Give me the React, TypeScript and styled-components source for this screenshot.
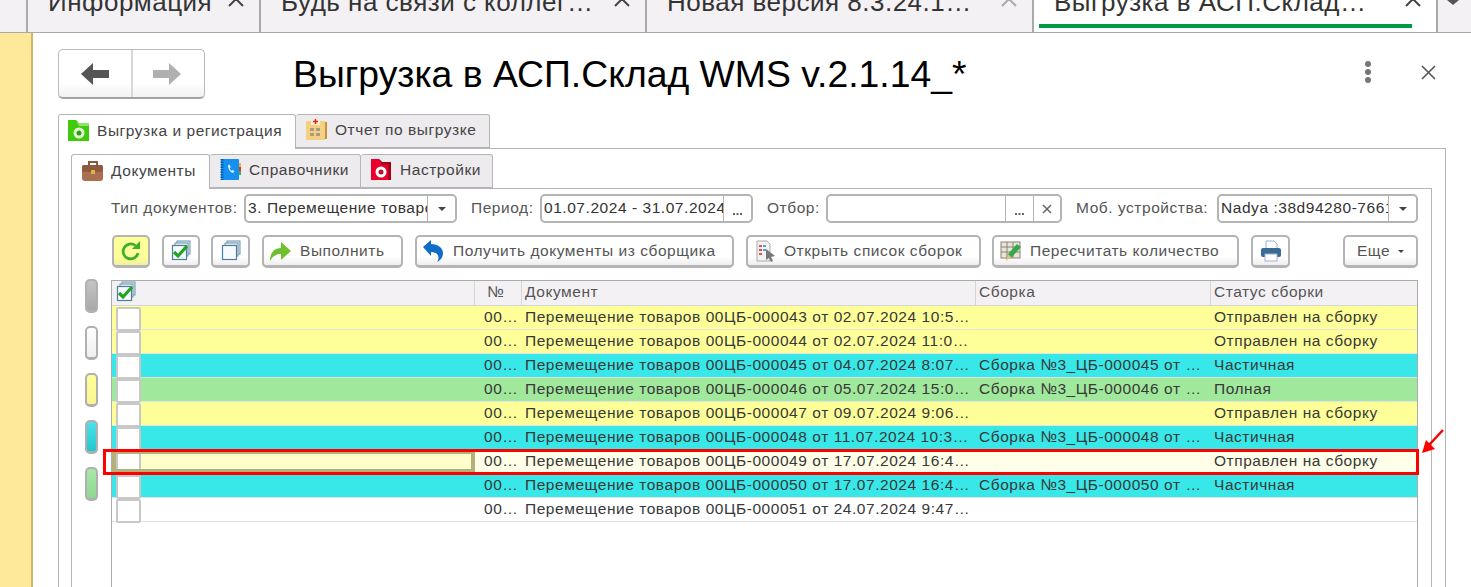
import React from "react";
import styled, { createGlobalStyle } from "styled-components";

const Global = createGlobalStyle`
  html, body { margin: 0; padding: 0; height: 100%; background: #fff; overflow: hidden; }
  #root { height: 587px; }
  * { box-sizing: border-box; }
`;
const Page = styled.div`
  width: 1471px; height: 587px; overflow: hidden; position: relative; display: flex; flex-direction: column;
  font-family: "Liberation Sans", Arial, sans-serif; color: #333; background: #fff;
`;
const TopBar = styled.div`
  height: 33px; flex: none; display: flex; background: #f4f1f5; border-bottom: 1px solid #aaa; overflow: hidden; padding-left: 26px;
`;
const TopTab = styled.div<{ $w: number; $active?: boolean }>`
  width: ${(p) => p.$w}px; flex: none; display: flex; align-items: flex-start; position: relative; overflow: hidden;
  height: 32px; padding-left: 20px; border-left: 2px solid #aaa; background: ${(p) => (p.$active ? "#fff" : "transparent")};
  ${(p) => (p.$active ? "border-right: 2px solid #aaa;" : "")}
`;
const TopTabText = styled.span`
  font-size: 26px; line-height: 24px; margin-top: -10px; white-space: nowrap; color: #333; letter-spacing: 0.5px; flex: 1;
`;
const TopClose = styled.svg<{ $dim?: boolean }>`
  position: absolute; top: -5px; right: 14px; width: 18px; height: 12px; fill: none;
  stroke: ${(p) => (p.$dim ? "#aaa" : "#444")}; stroke-width: 2;
`;
const GreenBar = styled.div`
  position: absolute; left: 5px; right: 24px; top: 24px; height: 4px; background: #009a46;
`;
const TopMore = styled.svg`
  margin-left: 9px; width: 12px; height: 5px; fill: #555; flex: none;
`;
const Body = styled.div`
  flex: 1; display: flex; min-height: 0;
`;
const SideStrip = styled.div`
  width: 33px; flex: none; background: #fee99a; border-right: 2px solid #c9b866;
`;
const Content = styled.div`
  flex: 1; padding: 16px 0 0 25px; display: flex; flex-direction: column; min-width: 0;
`;
const Head = styled.div`
  height: 50px; flex: none; display: flex; align-items: flex-start;
`;
const NavGroup = styled.div`
  width: 147px; height: 50px; flex: none; display: flex; border: 1px solid #bbb; border-bottom: 2px solid #a5a2a2; border-radius: 5px;
  background: linear-gradient(#fff 0, #fff 70%, #f3f1f3 100%);
`;
const NavCell = styled.div<{ $sep?: boolean }>`
  flex: ${(p) => (p.$sep ? "0 0 74px" : "1")}; display: flex; align-items: center; justify-content: center;
  ${(p) => (p.$sep ? "border-right: 2px solid #d9d7d9;" : "padding-right: 4px;")}
`;
const Title = styled.div`
  margin-left: 88px; font-size: 37.33px; line-height: 48px; color: #000; white-space: nowrap; margin-top: 1px; flex: 1;
`;
const HeadIcons = styled.div`
  display: flex; align-items: center; height: 46px; margin-right: 35px; gap: 49px;
`;
const Tabs = styled.div`
  display: flex; height: 35px; flex: none; margin-top: 15px;
`;
const Tab = styled.div<{ $active?: boolean; $w: number; $pl?: number }>`
  width: ${(p) => p.$w}px; height: ${(p) => (p.$active ? "35px" : "34px")}; flex: none; display: flex; align-items: center; gap: 7px;
  padding: 0 0 2px ${(p) => p.$pl ?? (p.$active ? 9 : 10)}px;
  font-size: 15.5px; letter-spacing: 0.55px; color: #444; white-space: nowrap;
  border: 1px solid #b5b5b5; border-radius: 3px 3px 0 0;
  ${(p) => (p.$active ? "border-bottom: none; background: #fff; position: relative; z-index: 1;" : "border-left: none; background: #eeebee;")}
`;
const OuterPanel = styled.div`
  width: 1388px; flex: 1; margin-top: -1px; border: 1px solid #b5b5b5; border-bottom: none; padding: 5px 13px 0 12px; display: flex; flex-direction: column; min-height: 0;
`;
const InnerTabs = styled(Tabs)`
  margin-top: 0;
`;
const InnerPanel = styled.div`
  flex: 1; margin-top: -1px; border: 1px solid #b5b5b5; border-bottom: none; display: flex; min-height: 0;
`;
const Pills = styled.div`
  width: 39px; flex: none; padding: 90px 0 0 13px; display: flex; flex-direction: column; gap: 13px;
`;
const Pill = styled.div<{ $c1: string; $c2: string }>`
  width: 13px; height: 34px; border-radius: 5px; border: 2px solid #b0b0b0; border-bottom-width: 3px;
  background: linear-gradient(${(p) => p.$c1}, ${(p) => p.$c2});
`;
const Main = styled.div`
  flex: 1; min-width: 0; display: flex; flex-direction: column; padding-top: 5px;
`;
const FilterRow = styled.div`
  height: 29px; flex: none; display: flex; align-items: center; font-size: 15.5px; letter-spacing: 0.55px; color: #555; white-space: nowrap;
`;
const FieldLabel = styled.span<{ $ml?: number; $w: number }>`
  margin: -2px 0 0 ${(p) => p.$ml ?? 0}px; width: ${(p) => p.$w}px; flex: none;
`;
const Field = styled.div<{ $w: number }>`
  width: ${(p) => p.$w}px; height: 29px; flex: none; display: flex; border: 2px solid #b4b4b4; border-radius: 5px; background: #fff; overflow: hidden;
`;
const FieldText = styled.div`
  flex: 1; min-width: 0; overflow: hidden; white-space: nowrap; padding: 2px 0 0 2px; color: #333; line-height: 20px;
`;
const FieldBtn = styled.div<{ $w?: number }>`
  width: ${(p) => p.$w ?? 28}px; flex: none; border-left: 1.5px solid #b4b4b4; display: flex; align-items: center; justify-content: center; color: #555;
`;
const Toolbar = styled.div`
  height: 33px; flex: none; margin: 12px 0 0 1px; display: flex; font-size: 15.5px; letter-spacing: 0.55px; color: #555; white-space: nowrap;
`;
const Btn = styled.div<{ $w: number; $ml?: number; $yellow?: boolean; $center?: boolean }>`
  width: ${(p) => p.$w}px; height: 33px; margin-left: ${(p) => p.$ml ?? 0}px; flex: none; display: flex; align-items: center; gap: 8px;
  ${(p) => (p.$center ? "justify-content: center;" : "padding-left: 6px;")}
  border: 2px solid #b4b4b4; border-bottom-width: 3px; border-radius: 5px;
  background: ${(p) => (p.$yellow ? "linear-gradient(#ffff99, #ffff99 70%, #f2efa0)" : "linear-gradient(#fff, #fff 70%, #efedef)")};
`;
const Table = styled.div`
  margin-top: 12px; flex: 1; min-height: 0; border: 1px solid #ababab; border-bottom: none; width: 1307px;
`;
const cols = "363px 47px 454px 235px 1fr";
const HeaderRow = styled.div`
  display: grid; grid-template-columns: ${cols}; height: 25px; background: #f4f1f5; border-bottom: 1px solid #d5d5d5; font-size: 15.5px; letter-spacing: 0.55px; color: #555;
`;
const HCell = styled.div<{ $last?: boolean; $pl?: number; $pt?: number }>`
  padding: ${(p) => p.$pt ?? 1}px 0 0 ${(p) => p.$pl ?? 3}px; line-height: 19px; white-space: nowrap; overflow: hidden; ${(p) => (p.$last ? "" : "border-right: 1px solid #d5d5d5;")}
`;
const Row = styled.div<{ $bg: string }>`
  display: grid; grid-template-columns: ${cols}; height: 24px; background: ${(p) => p.$bg}; border-bottom: 1px solid #e3e3e3; font-size: 15.5px; letter-spacing: 0.55px; color: #383838;
`;
const CheckCell = styled.div<{ $sel?: boolean }>`
  padding: 1px 0 0 4px; height: 24px;
  ${(p) => (p.$sel ? "background: #ffffcc; border: 4px solid #b5b078; border-bottom-width: 5px; padding: 0; overflow: hidden;" : "")}
`;
const CheckBox = styled.div<{ $sel?: boolean }>`
  width: 25px; height: 24px; background: #fff; border: 2px solid #c8c8c8; border-radius: 2px;
  ${(p) => (p.$sel ? "margin-top: -3px;" : "")}
`;
const Cell = styled.div<{ $ind?: boolean }>`
  padding: 0 0 0 3px; line-height: 21px; white-space: nowrap; overflow: hidden; text-overflow: ellipsis;
  ${(p) => (p.$ind ? "padding-left: 9px;" : "")}
`;
const RedBox = styled.div`
  position: absolute; left: 103px; top: 449px; width: 1316px; height: 26px; border: 3px solid #f00; pointer-events: none;
`;
const Arrow = styled.svg`
  position: absolute; left: 1421px; top: 428px; width: 26px; height: 26px;
`;
const Dots = styled.svg`
  width: 8px; height: 24px; fill: #777;
`;

const rows: [string, string, string, string][] = [
  ["#ffff99", "Перемещение товаров 00ЦБ-000043 от 02.07.2024 10:5…", "", "Отправлен на сборку"],
  ["#ffff99", "Перемещение товаров 00ЦБ-000044 от 02.07.2024 11:0…", "", "Отправлен на сборку"],
  ["#38e8e8", "Перемещение товаров 00ЦБ-000045 от 04.07.2024 8:07…", "Сборка №3_ЦБ-000045 от …", "Частичная"],
  ["#a0e89c", "Перемещение товаров 00ЦБ-000046 от 05.07.2024 15:0…", "Сборка №3_ЦБ-000046 от …", "Полная"],
  ["#ffff99", "Перемещение товаров 00ЦБ-000047 от 09.07.2024 9:06…", "", "Отправлен на сборку"],
  ["#38e8e8", "Перемещение товаров 00ЦБ-000048 от 11.07.2024 10:3…", "Сборка №3_ЦБ-000048 от …", "Частичная"],
  ["#fffee8", "Перемещение товаров 00ЦБ-000049 от 17.07.2024 16:4…", "", "Отправлен на сборку"],
  ["#38e8e8", "Перемещение товаров 00ЦБ-000050 от 17.07.2024 16:4…", "Сборка №3_ЦБ-000050 от …", "Частичная"],
  ["#ffffff", "Перемещение товаров 00ЦБ-000051 от 24.07.2024 9:47…", "", ""],
];

const Ic = ({ s = 22, children }: { s?: number; children: React.ReactNode }) => (
  <svg width={s} height={s} viewBox="0 0 22 22" style={{ flex: "none" }}>{children}</svg>
);
const FolderGreen = () => (
  <Ic><path d="M0 0h8l3 3h10v18H0z" fill="#3fcb0c" /><path d="M8 0l3 3h10v3H11z" fill="#8ee36a" /><circle cx="11" cy="13" r="5.500" fill="#e4f8d8" /><circle cx="11" cy="13" r="2.500" fill="#2f9d10" /></Ic>
);
const Report = () => (
  <Ic><rect x="0" y="2" width="19" height="19" fill="#f2d182" /><rect x="19" y="3" width="2" height="17" fill="#c9913a" /><rect x="4" y="9" width="4" height="3" fill="#a99c82" /><rect x="10" y="9" width="4" height="3" fill="#a99c82" /><rect x="4" y="14" width="4" height="3" fill="#a99c82" /><rect x="10" y="14" width="4" height="3" fill="#a99c82" /><rect x="5" y="0" width="9" height="6" fill="#f8eecb" /><path d="M9.500 0v5M7 2.500h5" stroke="#d23" strokeWidth="1.500" /></Ic>
);
const Case = () => (
  <Ic><path d="M7 5V2h8v3" fill="none" stroke="#8a5a3c" strokeWidth="2" /><rect x="0" y="5" width="21" height="16" rx="3" fill="#a96f50" /><rect x="0" y="5" width="21" height="7" rx="2" fill="#8f5a3e" /><rect x="9" y="10" width="4" height="4" fill="#e0b040" /></Ic>
);
const Phonebook = () => (
  <Ic><rect x="1" y="0" width="18" height="21" rx="1" fill="#1590f0" /><path d="M2 0v21" stroke="#0a5fb0" strokeWidth="3" strokeDasharray="1.500 1" /><path d="M8 6c0 4 2 7 5 8l1.500-2-2-1-1 .7c-1-.7-1.500-1.500-1.700-2.700l1-.7-1-2.500z" fill="#dff0ff" /><rect x="19" y="4" width="2" height="4" fill="#e8b820" /><rect x="19" y="8" width="2" height="4" fill="#e03030" /><rect x="19" y="12" width="2" height="4" fill="#40b040" /></Ic>
);
const RedFolder = () => (
  <Ic><path d="M0 0h8l3 3h9v18H0z" fill="#e8002a" /><path d="M8 0l3 3h9v18h-3V6H11z" fill="#a80018" /><circle cx="10" cy="13" r="5.500" fill="#fff" /><circle cx="10" cy="13" r="2.500" fill="#c01030" /></Ic>
);
const Refresh = () => (
  <Ic><path d="M18 13a7.500 7.500 0 1 1-2.500-7.300" fill="none" stroke="#3fae2a" strokeWidth="2.800" /><path d="M12 9h8V1z" fill="#3fae2a" /></Ic>
);
const Stack = ({ check }: { check?: boolean }) => (
  <Ic>
    <rect x="7" y="1" width="13" height="13" fill="#dfe8f0" stroke="#6f95ad" />
    <rect x="5" y="3" width="13" height="13" fill="#e8eff5" stroke="#6f95ad" />
    <rect x="2.500" y="5.500" width="14" height="14" fill="#f8fbfd" stroke="#4f7e9c" strokeWidth="1.200" />
    {check && <path d="M4 12l4 4 9-10" fill="none" stroke="#1fa51f" strokeWidth="3.200" />}
  </Ic>
);
const GreenArrow = () => (
  <Ic><path d="M0 21c0-8 4-13 11-13V2l10 9-10 9v-6c-5 0-8 2-11 7z" fill="#6fc02c" /></Ic>
);
const BlueUndo = () => (
  <Ic><path d="M0 7l8-7v4c7 0 12 4 12 9 0 4-2 7-6 9 2-3 2-6 0-8-1-1-3-2-6-2v4z" fill="#0f6cc8" /></Ic>
);
const DocCursor = () => (
  <Ic><path d="M3 1h10l3 3v17H3z" fill="#f3f3f3" stroke="#aaa" /><path d="M5 6h3M5 10h3M5 14h3" stroke="#e05050" strokeWidth="2" /><path d="M9 6h3M9 10h3" stroke="#60a0d0" strokeWidth="2" /><path d="M12 9l9 7-4 1 2 4-2 1-2-4-3 2z" fill="#777" /></Ic>
);
const TablePencil = () => (
  <Ic><rect x="1" y="2" width="19" height="16" fill="#e9e4da" stroke="#8b8275" /><path d="M1 7h19M1 12h19M7 2v16M13 2v16" stroke="#8b8275" /><path d="M6 19l2-5 9-10 4 3-9 10z" fill="#35a84a" /><path d="M6 21l2-7 3 3z" fill="#e8c080" /></Ic>
);
const Printer = () => (
  <Ic><path d="M6 1h8l3 3v5H6z" fill="#fff" stroke="#9fb4c8" /><rect x="1" y="8" width="20" height="9" rx="2" fill="#3a6a96" /><rect x="5" y="14" width="12" height="7" fill="#fff" stroke="#9fb4c8" /></Ic>
);

const Caret = ({ w = 8 }: { w?: number }) => (
  <svg width={w} height={w / 2} viewBox="0 0 8 4"><path d="M0 0h8L4 4z" fill="#444" /></svg>
);
const Ellipsis = () => (
  <svg width="9" height="3" viewBox="0 0 9 3" style={{ marginTop: 12 }}><path d="M0 0h2v2H0zM3.500 0h2v2h-2zM7 0h2v2H7z" fill="#666" /></svg>
);
const ChevUp = ({ dim }: { dim?: boolean }) => (
  <TopClose $dim={dim} viewBox="0 0 18 12"><path d="M2 11l7-7 7 7" /></TopClose>
);

export default function App() {
  return (
    <Page>
      <Global />
      <TopBar>
        <TopTab $w={233}><TopTabText>Информация</TopTabText><ChevUp /></TopTab>
        <TopTab $w={386}><TopTabText>Будь на связи с коллег…</TopTabText><ChevUp /></TopTab>
        <TopTab $w={387}><TopTabText>Новая версия 8.3.24.1…</TopTabText><ChevUp dim /></TopTab>
        <TopTab $w={406} $active><TopTabText>Выгрузка в АСП.Склад…</TopTabText><ChevUp /><GreenBar /></TopTab>
        <TopMore viewBox="0 0 12 5"><path d="M0 0h12L6 5z" /></TopMore>
      </TopBar>
      <Body>
        <SideStrip />
        <Content>
          <Head>
            <NavGroup>
              <NavCell $sep>
                <svg width="28" height="22" viewBox="0 0 28 22"><path d="M0 11L12 0v7h16v8H12v7z" fill="#555" /></svg>
              </NavCell>
              <NavCell>
                <svg width="28" height="22" viewBox="0 0 28 22"><path d="M28 11L16 0v7H0v8h16v7z" fill="#b0b0b0" /></svg>
              </NavCell>
            </NavGroup>
            <Title>Выгрузка в АСП.Склад WMS v.2.1.14_*</Title>
            <HeadIcons>
              <Dots viewBox="0 0 8 24"><circle cx="4" cy="4" r="3" /><circle cx="4" cy="12" r="3" /><circle cx="4" cy="20" r="3" /></Dots>
              <svg width="15" height="15" viewBox="0 0 15 15"><path d="M1 1l13 13M14 1L1 14" stroke="#555" strokeWidth="1.600" /></svg>
            </HeadIcons>
          </Head>
          <Tabs>
            <Tab $active $w={238}><FolderGreen />Выгрузка и регистрация</Tab>
            <Tab $w={194}><Report />Отчет по выгрузке</Tab>
          </Tabs>
          <OuterPanel>
            <InnerTabs>
              <Tab $active $w={139} $pl={10}><Case />Документы</Tab>
              <Tab $w={151}><Phonebook />Справочники</Tab>
              <Tab $w={132}><RedFolder />Настройки</Tab>
            </InnerTabs>
            <InnerPanel>
              <Pills>
                <Pill $c1="#c4c4c4" $c2="#a8a8a8" />
                <Pill $c1="#ffffff" $c2="#f0eef0" />
                <Pill $c1="#ffff99" $c2="#fbf68f" />
                <Pill $c1="#50e0e8" $c2="#20c8d0" />
                <Pill $c1="#a8e8a8" $c2="#90d890" />
              </Pills>
              <Main>
                <FilterRow>
                  <FieldLabel $w={133}>Тип документов:</FieldLabel>
                  <Field $w={213}><FieldText>3. Перемещение товаров</FieldText><FieldBtn><Caret /></FieldBtn></Field>
                  <FieldLabel $ml={14} $w={69}>Период:</FieldLabel>
                  <Field $w={213}><FieldText>01.07.2024 - 31.07.2024</FieldText><FieldBtn><Ellipsis /></FieldBtn></Field>
                  <FieldLabel $ml={14} $w={59}>Отбор:</FieldLabel>
                  <Field $w={236}>
                    <FieldText />
                    <FieldBtn><Ellipsis /></FieldBtn>
                    <FieldBtn $w={27}>
                      <svg width="10" height="10" viewBox="0 0 10 10"><path d="M1 1l8 8M9 1L1 9" stroke="#666" strokeWidth="1.500" /></svg>
                    </FieldBtn>
                  </Field>
                  <FieldLabel $ml={14} $w={141}>Моб. устройства:</FieldLabel>
                  <Field $w={201}><FieldText>Nadya :38d94280-7661</FieldText><FieldBtn><Caret /></FieldBtn></Field>
                </FilterRow>
                <Toolbar>
                  <Btn $w={38} $yellow $center><Refresh /></Btn>
                  <Btn $w={38} $ml={12} $center><Stack check /></Btn>
                  <Btn $w={39} $ml={11} $center><Stack /></Btn>
                  <Btn $w={141} $ml={12}><GreenArrow />Выполнить</Btn>
                  <Btn $w={319} $ml={12}><BlueUndo />Получить документы из сборщика</Btn>
                  <Btn $w={235} $ml={12}><DocCursor />Открыть список сборок</Btn>
                  <Btn $w={247} $ml={11}><TablePencil />Пересчитать количество</Btn>
                  <Btn $w={39} $ml={12} $center><Printer /></Btn>
                  <Btn $w={75} $ml={53} $center>Еще <Caret w={6} /></Btn>
                </Toolbar>
                <Table>
                  <HeaderRow>
                    <HCell $pl={3} $pt={0}><Stack check /></HCell>
                    <HCell $pl={12}>№</HCell>
                    <HCell>Документ</HCell>
                    <HCell>Сборка</HCell>
                    <HCell $last>Статус сборки</HCell>
                  </HeaderRow>
                  {rows.map((r, i) => (
                    <Row key={i} $bg={r[0]}>
                      <CheckCell $sel={i === 6}><CheckBox $sel={i === 6} /></CheckCell>
                      <Cell $ind>00…</Cell>
                      <Cell>{r[1]}</Cell>
                      <Cell>{r[2]}</Cell>
                      <Cell>{r[3]}</Cell>
                    </Row>
                  ))}
                </Table>
              </Main>
            </InnerPanel>
          </OuterPanel>
        </Content>
      </Body>
      <RedBox />
      <Arrow viewBox="0 0 26 26"><path d="M22 2L8 17" stroke="#f00" strokeWidth="2.500" /><path d="M1 25l4-13 9 9z" fill="#f00" /></Arrow>
    </Page>
  );
}
